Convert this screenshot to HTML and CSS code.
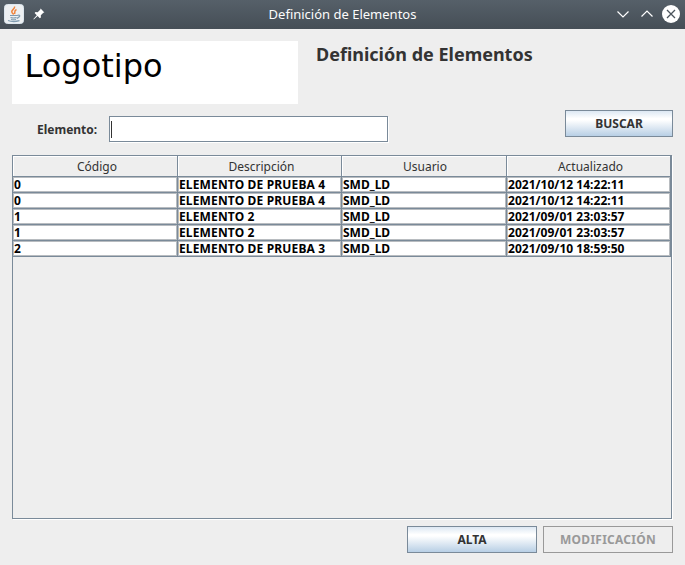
FILE: index.html
```html
<!DOCTYPE html>
<html lang="es">
<head>
<meta charset="utf-8">
<title>Definición de Elementos</title>
<link rel="stylesheet" href="styles.css">
</head>
<body>
<div class="window">
  <header class="titlebar">
    <div class="tools">
      <svg class="java" width="20" height="20" viewBox="0 0 20 20">
        <rect x=".5" y=".5" width="19" height="19" rx="3" fill="#edf0f2" stroke="#dce6ee"/>
        <path d="M10.500 2.500C11.500 5 6.500 6 8 8.500L9.700 10.500M12.500 5.500C9.500 7 11.500 8 10.500 10" fill="none" stroke="#f0843c" stroke-width="1.500"/>
        <path d="M6 11.500H13M6.500 13.500Q9.500 14.500 12.500 13.500M7 15.500Q9.500 16.300 12 15.500M13 11.500Q16.500 10.500 15.500 12.500L13 14.500M4 16.500Q9 18.500 15.500 16.700" fill="none" stroke="#7f9bb0" stroke-width="1.200"/>
      </svg>
      <svg class="pin" width="12" height="12" viewBox="0 0 12 12">
        <path d="M7.600 0.600L11.400 4.400L10.300 4.800L7.800 7.200L7.900 9.400L6.800 10.200L4.600 8L0.800 11.400L0.400 11L3.800 7.200L1.600 5.100L2.500 4.100L4.700 4.200L7.200 1.700Z" fill="#fff"/>
      </svg>
    </div>
    <div class="caption">Definición de Elementos</div>
    <div class="controls">
      <svg width="66" height="20" viewBox="0 0 66 20" fill="none" stroke="#fff" stroke-width="1.200">
        <path d="M2.500 7.500L8 13L13.500 7.500M26.500 12.500L32 7L37.500 12.500"/>
        <circle cx="56" cy="10" r="9" fill="#fff" stroke="none"/>
        <path d="M52 6L60 14M60 6L52 14" stroke="#4b545c" stroke-width="1.300"/>
      </svg>
    </div>
  </header>
  <main class="content">
    <div class="brand">
      <div class="logo">Logotipo</div>
      <h1>Definición de Elementos</h1>
    </div>
    <div class="search">
      <label>Elemento:</label>
      <div class="field"><span class="caret"></span></div>
      <div class="button find">BUSCAR</div>
    </div>
    <div class="pane">
      <div class="row head"><div>Código</div><div>Descripción</div><div class="user">Usuario</div><div>Actualizado</div></div>
      <div class="row"><div>0</div><div class="desc">ELEMENTO DE PRUEBA 4</div><div>SMD_LD</div><div class="date">2021/10/12 14:22:11</div></div>
      <div class="row"><div>0</div><div class="desc">ELEMENTO DE PRUEBA 4</div><div>SMD_LD</div><div class="date">2021/10/12 14:22:11</div></div>
      <div class="row"><div>1</div><div class="desc">ELEMENTO 2</div><div>SMD_LD</div><div class="date">2021/09/01 23:03:57</div></div>
      <div class="row"><div>1</div><div class="desc">ELEMENTO 2</div><div>SMD_LD</div><div class="date">2021/09/01 23:03:57</div></div>
      <div class="row"><div>2</div><div class="desc">ELEMENTO DE PRUEBA 3</div><div>SMD_LD</div><div class="date">2021/09/10 18:59:50</div></div>
    </div>
    <div class="actions">
      <div class="button">ALTA</div>
      <div class="button disabled">MODIFICACIÓN</div>
    </div>
  </main>
</div>
</body>
</html>
```
FILE: styles.css
```css
* { box-sizing: border-box; }
body { margin: 0; font: 12px "Noto Sans", sans-serif; color: #333; white-space: nowrap; }
.window { width: 685px; height: 565px; background: #eee; overflow: hidden; }
.titlebar {
  height: 29px; display: grid; grid-template-columns: 90px 1fr 90px; align-items: center;
  background: linear-gradient(#566069, #454e56); color: #fcfcfc;
}
.tools { display: flex; align-items: center; gap: 9px; padding: 0 0 2px 4px; }
.caption { text-align: center; font-size: 13px; line-height: 27px; }
.controls { display: flex; justify-content: flex-end; padding: 0 4px 2px 0; }
.content { padding: 12px 12px 0; }
.brand { display: flex; height: 63px; }
.logo {
  width: 286px; background: #fff; color: #000; padding: 6px 0 0 12.5px;
  font: 32px/38px "DejaVu Sans", sans-serif;
}
h1 { margin: 0 0 0 18px; font-size: 18px; line-height: 27px; font-weight: 700; }
.search { display: flex; height: 51px; align-items: flex-start; font-weight: 700; }
label { width: 97px; padding: 17px 0 0 25px; line-height: 17px; }
.field {
  width: 279px; height: 26px; margin-top: 12px; padding: 4px 1px; background: #fff;
  border: 1px solid #7a8a99; box-shadow: 1px 1px #fff;
}
.caret { display: block; width: 1px; height: 17px; background: #333; }
.button {
  width: 130px; height: 27px; border: 1px solid #7a8a99; text-align: center;
  font-weight: 700; line-height: 25px;
  background: linear-gradient(#dde8f3, #fff 30%, #fff 36%, #b8cfe5);
}
.find { width: 108px; margin: 6px 0 0 auto; }
.disabled { border-color: #999; background: #eee; color: #999; letter-spacing: .25px; }
.pane {
  width: 660px; height: 364px; border: 1px solid #7a8a99; box-shadow: 1px 1px #fff;
}
.row { display: grid; grid-template-columns: 165px 164px 165px 164px; height: 16px; width: 658px; }
.row > div {
  border: solid #7a8a99; border-width: 0 1px 1px 0; background: #fff;
  box-shadow: inset 0 0 0 1px #b8bcc0;
  color: #000; font-weight: 700; line-height: 15px; padding-left: 1px; overflow: hidden;
}
.row > .desc { letter-spacing: .15px; }
.row > .date { letter-spacing: .03px; }
.row.head { height: 21px; }
.row.head > div {
  background: #eee; box-shadow: inset 1px 1px #fff; color: #333;
  font-weight: 400; line-height: 21px; text-align: center; padding-left: 4px;
}
.row.head > .user { padding-left: 2px; }
.actions { display: flex; justify-content: flex-end; gap: 6px; padding-top: 7px; }
```
